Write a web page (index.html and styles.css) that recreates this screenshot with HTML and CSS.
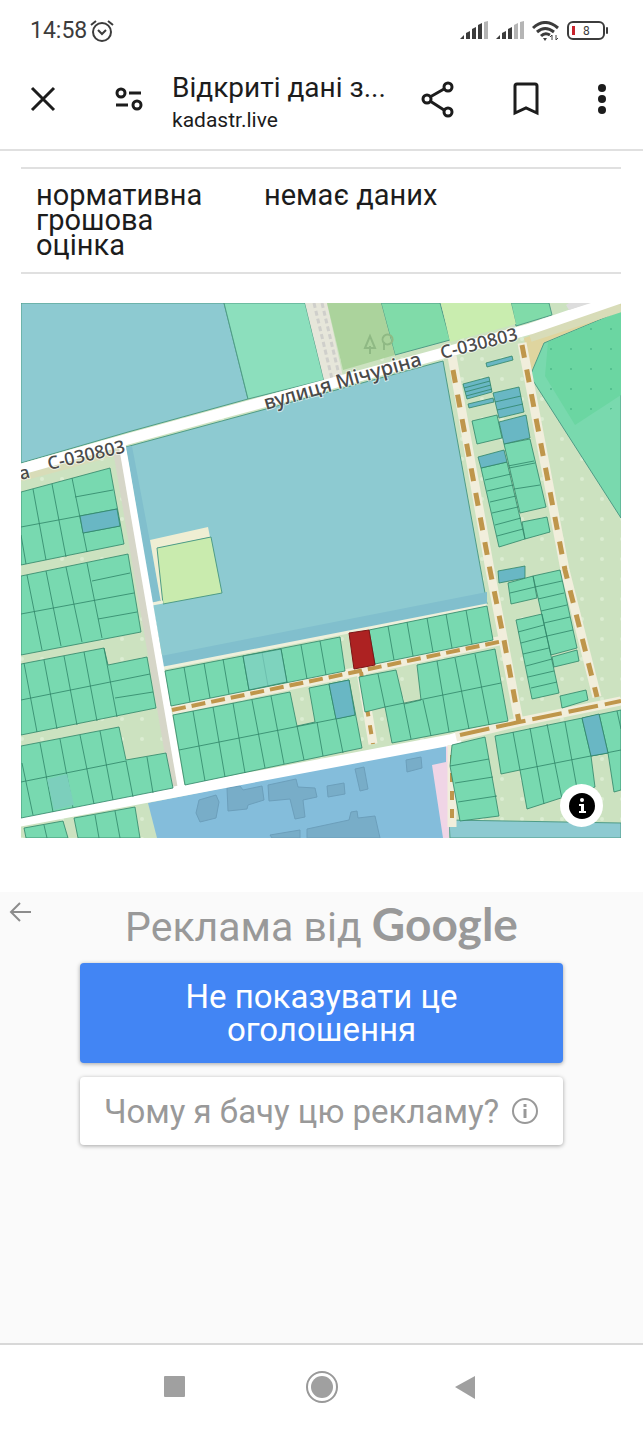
FILE: index.html
```
<!DOCTYPE html>
<html lang="uk">
<head>
    <meta charset="UTF-8">
    <meta name="viewport" content="width=device-width, initial-scale=1.0">
    <title>Відкриті дані земельного кадастру</title>
    <link rel="stylesheet" href="styles.css">
</head>
<body>
    <div class="status">
        <span class="time">14:58</span>
        <svg class="alarm" width="24" height="24" viewBox="0 0 24 24" fill="none" stroke="#3c3c3c" stroke-width="2">
            <circle cx="12" cy="13" r="9"/>
            <path d="M1 6l5-4M23 6l-5-4M8 11l4 4 4-4"/>
        </svg>
        <div class="signals">
            <svg width="28" height="19" viewBox="0 0 28 19">
                <path fill="#3c3c3c" d="M0 18l4-4v4zM6 12l4-2v8H6zM12 8l4-2v12h-4zM18 4l4-2v16h-4z"/>
                <path fill="#b5b5b5" d="M24 1l4-1v18h-4z"/>
            </svg>
            <svg width="28" height="19" viewBox="0 0 28 19">
                <path fill="#3c3c3c" d="M0 18l4-4v4zM6 12l4-2v8H6zM12 8l4-2v12h-4z"/>
                <path fill="#b5b5b5" d="M18 4l4-2v16h-4zM24 1l4-1v18h-4z"/>
            </svg>
            <svg width="27" height="20" viewBox="0 0 27 20" fill="none" stroke="#3c3c3c" stroke-width="3">
                <path d="M1 7Q13-4 26 7M5 11Q13 4 22 11M9 15Q13 11 18 14"/>
                <path d="M11 17h4l-2 3z" fill="#3c3c3c" stroke="none"/>
                <path d="M20 19v-5l-2 2M24 14v5l2-2" stroke-width="1"/>
            </svg>
            <svg width="42" height="19" viewBox="0 0 42 19">
                <rect x="1" y="1" width="36" height="17" rx="5" fill="none" stroke="#3c3c3c" stroke-width="2"/>
                <rect x="5" y="5" width="3" height="9" fill="#c8232c"/>
                <rect x="39" y="6" width="2" height="7" rx="1" fill="#3c3c3c"/>
                <text x="16" y="14" class="battery-text">8</text>
            </svg>
        </div>
    </div>

    <header class="toolbar">
        <button aria-label="Закрити">
            <svg width="26" height="26" viewBox="0 0 26 26" fill="none" stroke="#1c1c1c" stroke-width="3"><path d="M2 2l22 22M24 2L2 24"/></svg>
        </button>
        <button aria-label="Інформація про сайт">
            <svg width="28" height="24" viewBox="0 0 28 24" fill="none" stroke="#1c1c1c" stroke-width="3">
                <circle cx="6" cy="6" r="4"/><circle cx="22" cy="18" r="4"/>
                <path d="M14 6h12M1 18h12"/>
            </svg>
        </button>
        <div class="site">
            <div class="site-title">Відкриті дані з...</div>
            <div class="site-url">kadastr.live</div>
        </div>
        <div class="actions">
            <button aria-label="Поділитися">
                <svg width="33" height="37" viewBox="0 0 33 37" fill="none" stroke="#1c1c1c" stroke-width="3">
                    <circle cx="6" cy="18" r="4"/><circle cx="27" cy="6" r="4"/><circle cx="27" cy="31" r="4"/>
                    <path d="M9 16l14-8M9 20l14 9"/>
                </svg>
            </button>
            <button aria-label="Закладка">
                <svg width="26" height="34" viewBox="0 0 26 34" fill="none" stroke="#1c1c1c" stroke-width="3"><path d="M2 4Q2 2 4 2h18q2 0 2 2v27l-11-5-11 5z"/></svg>
            </button>
            <button aria-label="Меню">
                <svg width="8" height="30" viewBox="0 0 8 30" fill="#1c1c1c"><circle cx="4" cy="4" r="4"/><circle cx="4" cy="15" r="4"/><circle cx="4" cy="26" r="4"/></svg>
            </button>
        </div>
    </header>

    <main>
        <table>
            <tr>
                <th scope="row">нормативна грошова оцінка</th>
                <td>немає даних</td>
            </tr>
        </table>

        <div class="map">
            <svg viewBox="21 303 600 535" role="img" aria-label="Кадастрова карта">
                <defs>
                    <pattern id="dots" width="20" height="20" patternUnits="userSpaceOnUse" x="12" y="9"><circle cx="10" cy="10" r="2" fill="#dcecd2"/></pattern>
                    <pattern id="trees" width="20" height="20" patternUnits="userSpaceOnUse"><circle cx="11" cy="9" r="1" fill="#4dba8a"/></pattern>
                </defs>
                <rect x="21" y="303" width="600" height="535" fill="#cce2c0"/>
                <rect x="21" y="303" width="600" height="535" fill="url(#dots)"/>

                <!-- fields -->
                <g class="field">
                    <path fill="#8dcad1" d="M21 303H224L248 399 128 432 21 463z"/>
                    <path fill="#8cdfbd" d="M224 303H305L324 380 248 399z"/>
                    <path fill="#80dba9" d="M381 303H440L450 340 395 355z"/>
                    <path fill="#80dba9" d="M511 303H549L552 315 516 326z"/>
                    <path fill="#8dcad1" d="M126 447L443 361 487 604 164 668 152 604 161 602z"/>
                    <path fill="#8dcad1" d="M449 820L621 823V838H450z"/>
                </g>
                <path fill="#81bfcd" d="M126 447l6-1 29 154-9 4zM156 657l331-65v12L164 668z"/>
                <path fill="#e6e6da" d="M305 303h22l16 74-19 3z"/>
                <path d="M314 303l18 76M322 303l18 76" stroke="#cfcfcb" stroke-width="3" fill="none" stroke-dasharray="5 3"/>
                <path fill="#abd39c" d="M327 303H381L395 355 343 370z"/>
                <path fill="#c9edaf" d="M441 303H511L516 324 450 342z"/>
                <path d="M370 354v-8m-5 2l5-12 5 12zM384 350v-8m0-6a5 5 0 1 1 0 7a5 5 0 0 1 0-7" fill="none" stroke="#8fb984" stroke-width="2"/>
                <path fill="#dfd59f" d="M524 338L621 304V311L544 343 530 377z"/>
                <path class="field" fill="#79d9ae" d="M621 311L544 343 530 376 621 518z"/>
                <path fill="#6bd6a2" d="M621 311L548 342 545 376 575 425 621 395z"/>
                <path fill="url(#trees)" d="M621 311L544 343 540 376 575 425 621 405z"/>
                <path fill="#efeed3" d="M150 540L208 527 210 537 158 548 164 603 161 603z"/>
                <path class="field" fill="#c9ebae" d="M157 548L211 537 222 593 163 604z"/>

                <!-- school yard -->
                <path fill="#84bddb" d="M148 803L446 744 449 838H157z"/>
                <path fill="#f0d5e6" d="M446 742h5l-2 96h-6l-11-73 14-3z"/>
                <g fill="#78adc8" stroke="#6c9fbb">
                    <path d="M199 800l17-5 3 7-3 16-16 4-4-9zM227 788l13-2 3 4 19-4 2 14-16 5-1 4-19 2zM268 785l28-6 2 8 17 1 2 9-14 3 2 17-10 2-5-20-21 2zM327 786l17-3 1 11-17 3zM355 769l9-2 4 22-8 2zM406 760l15-3 1 11-15 4z"/>
                    <path d="M307 829l42-9 2-8 6-1 1 7 17-2 5 22h-73zM270 835l30-5v8h-28z"/>
                </g>

                <!-- roads -->
                <path d="M15 478L122 449M530 337L621 307" stroke="#d8dcb8" stroke-width="10" fill="none"/>
                <path d="M118 450L176 790" stroke="#d6d6c8" stroke-width="10" fill="none"/>
                <path d="M152 604l11-2M164 668l323-63" stroke="#eef0dc" stroke-width="3" fill="none"/>
                <g fill="none" stroke="#fff" class="road">
                    <path stroke-width="11" d="M15 471L128 439 230 411 425 358 530 329 635 293"/>
                    <path stroke-width="7" d="M122 444L182 792"/>
                    <path stroke-width="11" d="M15 822L180 791 450 740 460 737"/>
                </g>
                <path fill="#ddd" d="M566 305l3 5 22-7h-22z"/>

                <!-- dirt tracks -->
                <g fill="none" stroke="#f1eedc" stroke-width="9">
                    <path d="M452 356L490 570 519 722"/>
                    <path d="M522 343L565 570 597 697"/>
                    <path d="M172 710L350 673 503 640"/>
                    <path d="M361 672L373 744M456 737L519 722 621 701M452 745v82"/>
                </g>
                <g fill="none" stroke="#bf964b" stroke-width="5">
                    <path stroke-dasharray="13 12" d="M453 370L490 570 504 640 519 722"/>
                    <path stroke-dasharray="13 12" d="M522 345L565 570 597 697"/>
                    <path stroke-width="4" stroke-dasharray="14 6" d="M172 710L350 673 503 641"/>
                    <path stroke-width="4" stroke-dasharray="9 9" d="M361 672L373 744M452 755v72"/>
                    <path stroke-width="4" stroke-dasharray="30 7" d="M460 735L519 722 621 701"/>
                </g>

                <!-- parcels, west -->
                <g class="parcel">
                    <path d="M21 492L110 468 124 544 21 565zM21 527L117 509M75 497l38-7M83 533l37-7M33 489l13 71M52 484l14 73M72 478l15 74M21 535l5 29"/>
                    <path d="M21 576L128 554 141 632 21 655zM21 614L134 593M27 575l15 75M46 571l15 75M66 567l16 75M87 563l15 75M92 581l38-8M98 619l39-7"/>
                    <path d="M21 664L104 648 108 665 147 657 156 708 21 735zM21 700L150 674M115 698l38-6M24 663l13 69M44 660l13 69M64 656l13 69M84 652l13 69M104 648l13 69"/>
                    <path d="M21 746L119 727 126 760 166 753 173 788 21 818zM21 782L126 761M40 743l13 69M60 739l13 69M80 735l14 69M100 731l13 69M126 761l7 36M147 757l6 36M22 763l11 52"/>
                    <path d="M24 828L63 821 68 838H26zM44 825l3 13M74 818L135 807 140 838H78zM95 815l4 23M115 811l5 27"/>
                    <path class="blue" d="M80 516l37-7 3 17-37 7z"/>
                </g>
                <path fill="#7ccfbc" d="M47 779l20-5 7 31-20 5z"/>

                <!-- parcels, centre -->
                <g class="parcel">
                    <path d="M165 671L340 637 345 671 171 706zM184 667l6 35M204 663l6 35M223 659l6 35M243 656l6 34M262 652l6 34M281 649l6 34M301 645l6 34M320 641l6 34"/>
                    <path d="M369 630L487 606 493 640 375 664zM388 626l6 34M407 622l6 34M427 618l6 34M446 614l6 34M466 610l6 34"/>
                    <path d="M173 715L290 692 297 726 315 722 309 688 349 680 362 748 185 785zM179 750L355 715M193 711l12 70M213 707l12 70M233 703l12 70M252 700l13 68M271 696l13 68M297 726l7 34M317 722l6 34M329 684l14 69"/>
                    <path d="M359 677L396 670 404 704 421 700 417 665 495 649 508 721 392 743 385 707 365 712zM385 707L501 683M378 674l7 33M404 704l7 35M423 700l8 36M437 661l12 71M455 658l14 71M475 654l14 71"/>
                    <path class="blue" d="M329 684l20-4 6 35-19 4z"/>
                    <path class="teal" d="M243 656l38-7 6 33-38 8z"/>
                </g>
                <path fill="#ad2222" stroke="#7c1515" d="M349 633L369 630 375 665 354 669z"/>

                <!-- parcels, east -->
                <g class="parcel">
                    <path d="M472 421l25-6 5 23-25 6zM504 444l26-5 16 68-26 6zM508 466l26-5M509 468l26-5M514 489l26-4M481 468l26-6 18 77-26 8zM485 480l26-6M487 491l26-6M490 502l26-6M492 513l26-6M495 525l26-7M497 536l26-7M522 522l25-5 3 15-25 7z"/>
                    <path d="M508 583l25-7 4 22-26 6zM510 593l25-6M533 576l27-6 17 78-26 7zM535 587l27-6M538 599l26-6M541 611l26-6M544 623l26-6M547 636l26-6M516 620l26-6 17 79-27 6zM518 632l26-7M521 643l26-7M523 654l26-6M526 666l26-7M528 677l26-6M531 688l26-6M552 657l25-7 2 11-25 6zM560 696l26-6 2 10-26 8z"/>
                    <path d="M452 745L485 737 499 816 460 821 450 766zM450 766l39-7M455 783l38-6M458 802l39-6"/>
                    <path d="M495 736L621 710V790L614 792 608 753 591 756 595 787 527 809 520 770 501 774zM520 770L621 750M513 732l7 38M530 728l14 76M547 724l15 75M565 722l13 72M582 718l9 38M599 714l9 39M617 711l4 18"/>
                    <path class="blue" d="M486 363l26-7 1 4-26 7zM463 384l26-7 3 15-25 7zM464 388l26-7M465 392l26-7M466 396l26-7M468 404l25-6 1 4-25 6zM493 393l26-6 5 25-25 6zM495 402l26-6M497 410l26-6M499 422l27-7 4 23-26 6zM478 457l26-7 3 12-26 6zM498 571l27-5v12l-26 5zM582 718l17-4 9 39-17 3z"/>
                </g>

                <g class="map-label">
                    <text transform="translate(49 470) rotate(-13)">С-030803</text>
                    <text class="street" transform="translate(266 410) rotate(-16)">вулиця Мічуріна</text>
                    <text transform="translate(442 359) rotate(-14)">С-030803</text>
                    <text class="code-end" transform="translate(21 480) rotate(-15)">а</text>
                </g>
            </svg>
            <button class="info" aria-label="Про карту">
                <svg width="26" height="26" viewBox="0 0 26 26">
                    <circle cx="13" cy="13" r="13"/>
                    <circle cx="13" cy="7" r="2" fill="#fff"/>
                    <path fill="#fff" d="M10 11h5v7h2v2h-7v-2h2v-5h-2z"/>
                </svg>
            </button>
        </div>
    </main>

    <section class="ad">
        <button class="back" aria-label="Назад">
            <svg width="22" height="20" viewBox="0 0 22 20" fill="none" stroke="#8c8c8c" stroke-width="2"><path d="M22 10H2M11 1L2 10l9 9"/></svg>
        </button>
        <div class="ad-title">Реклама від <span class="google">Google</span></div>
        <button class="ad-btn primary">Не показувати це оголошення</button>
        <button class="ad-btn">Чому я бачу цю рекламу?
            <svg width="28" height="28" viewBox="0 0 28 28" fill="none" stroke="#999" stroke-width="2">
                <circle cx="14" cy="14" r="12"/>
                <path d="M14 12v9M14 7v3" stroke-width="3"/>
            </svg>
        </button>
    </section>

    <nav>
        <button aria-label="Останні програми"><svg width="32" height="32" viewBox="0 0 32 32"><rect x="4" y="5" width="21" height="21" rx="1" fill="#a0a0a0"/></svg></button>
        <button aria-label="Головний екран"><svg width="32" height="32" viewBox="0 0 32 32"><circle cx="16" cy="16" r="15" fill="none" stroke="#999" stroke-width="2"/><circle cx="16" cy="16" r="11" fill="#a0a0a0"/></svg></button>
        <button aria-label="Назад"><svg width="32" height="32" viewBox="0 0 32 32"><path d="M3 16L23 5V28z" fill="#a0a0a0"/></svg></button>
    </nav>
</body>
</html>
```
FILE: styles.css
```
* {
    box-sizing: border-box;
}
body {
    font-family: Roboto, Arial, sans-serif;
    margin: 0;
    min-height: 100vh;
    display: flex;
    flex-direction: column;
    background-color: #fff;
    color: #1c1c1c;
}
button {
    font-family: inherit;
    background: none;
    border: none;
    padding: 0;
    cursor: pointer;
}
svg {
    display: block;
}
.status {
    display: flex;
    align-items: center;
    height: 61px;
    padding: 0 34px 0 30px;
    color: #3c3c3c;
}
.time {
    font-size: 23px;
}
.alarm {
    margin-left: 3px;
}
.signals {
    display: flex;
    align-items: center;
    gap: 8px;
    margin-left: auto;
}
.battery-text {
    font-size: 12px;
    fill: #3c3c3c;
}
.toolbar {
    display: flex;
    align-items: center;
    height: 90px;
    padding: 0 37px 12px 30px;
    border-bottom: 2px solid #e0e0e0;
}
.toolbar button + button {
    margin-left: 59px;
}
.site {
    flex: 1;
    margin-left: 29px;
    padding-top: 5px;
    white-space: nowrap;
}
.site-title {
    font-size: 28px;
    line-height: 36px;
}
.site-url {
    font-size: 21px;
    line-height: 28px;
}
.actions {
    display: flex;
    align-items: center;
}
main {
    padding: 16px 22px 54px 21px;
}
table {
    width: 100%;
    border-collapse: collapse;
    border-top: 2px solid #e0e0e0;
    border-bottom: 2px solid #e0e0e0;
    font-size: 29px;
    line-height: 25px;
}
th, td {
    padding: 14px 15px;
    text-align: left;
    vertical-align: top;
    font-weight: normal;
}
th {
    width: 38%;
}
.map {
    position: relative;
    margin-top: 29px;
}
.map > svg {
    width: 100%;
    height: auto;
}
.field {
    stroke: #4f9c86;
    stroke-width: 1;
}
.road {
    stroke-linejoin: round;
}
.parcel path {
    fill: #78d9b0;
    stroke: #2f8468;
    stroke-opacity: 0.8;
    stroke-width: 1;
}
.parcel .blue {
    fill: #69b7c4;
}
.parcel .teal {
    fill: #80d0c4;
    fill-opacity: 0.7;
}
.map-label {
    font-family: "Noto Sans", sans-serif;
    font-size: 18px;
    font-weight: 500;
    fill: #4a4a4a;
    stroke: #fff;
    stroke-opacity: 0.6;
    stroke-width: 2;
    paint-order: stroke;
}
.map-label .street {
    font-size: 20px;
}
.info {
    position: absolute;
    right: 18px;
    bottom: 11px;
    display: flex;
    align-items: center;
    justify-content: center;
    width: 43px;
    height: 43px;
    border-radius: 50%;
    background-color: #fff;
}
.ad {
    position: relative;
    flex: 1;
    display: flex;
    flex-direction: column;
    align-items: center;
    padding: 4px 80px 40px;
    background-color: #fafafa;
    border-bottom: 2px solid #d8d8d8;
}
.back {
    position: absolute;
    left: 9px;
    top: 10px;
}
.ad-title {
    font-size: 41px;
    line-height: 56px;
    color: #999;
    white-space: nowrap;
}
.google {
    font-family: Lato, sans-serif;
    font-size: 46px;
    font-weight: bold;
}
.ad-btn {
    display: flex;
    align-items: center;
    justify-content: center;
    gap: 12px;
    width: 100%;
    min-height: 68px;
    margin-top: 14px;
    border-radius: 4px;
    background-color: #fff;
    color: #999;
    font-size: 33px;
    line-height: 33px;
    box-shadow: 0 1px 4px rgba(0, 0, 0, 0.35);
    white-space: nowrap;
}
.ad-btn.primary {
    margin-top: 8px;
    padding: 17px 80px;
    background-color: #4285f4;
    color: #fff;
    white-space: normal;
}
nav {
    display: flex;
    align-items: center;
    justify-content: center;
    gap: 114px;
    height: 84px;
}
```
